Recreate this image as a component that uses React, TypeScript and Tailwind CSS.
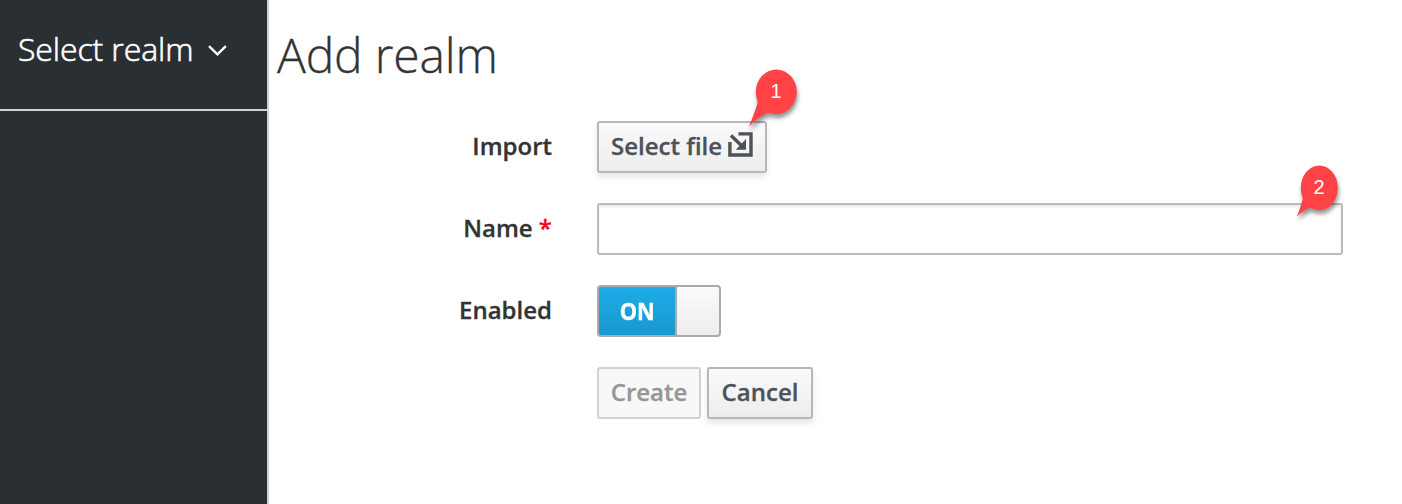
import type { ReactNode } from "react";

function Pin({ n, className, rx, tail }: { n: number; className: string; rx: number; tail: string }) {
  return (
    <svg className={`pointer-events-none absolute overflow-visible ${className}`} width="60" height="70" viewBox="0 0 60 70">
      <g fill="#ff4245" className="[filter:drop-shadow(1px_4px_2px_rgba(0,0,0,0.42))]">
        <path d={tail} />
        <ellipse cx="30.3" cy="31.8" rx={rx} ry="22.3" />
      </g>
      <text x="30" y="37.5" textAnchor="middle" fill="#fff" fontSize="20" fontWeight="400" fontFamily="Liberation Sans, Arial, sans-serif">
        {n}
      </text>
    </svg>
  );
}

function Row({ label, children }: { label?: ReactNode; children: ReactNode }) {
  return (
    <div className="flex h-[52px]">
      <div className="mr-[45px] w-[283px] text-right leading-[50px] whitespace-nowrap text-[#333] [-webkit-text-stroke:0.3px]">{label}</div>
      {children}
    </div>
  );
}

const button =
  "relative flex h-[52px] items-center justify-center rounded-[3px] border-2 border-[#b7b7b7] bg-linear-to-b from-[#fafafa] to-[#ededed] text-[#4d5258] shadow-[0_4px_6px_rgba(3,3,3,0.1)] whitespace-nowrap";

export default function App() {
  return (
    <div className="flex h-[504px] w-[1402px] overflow-hidden bg-white font-['Open_Sans',sans-serif] text-[24px] font-semibold">
      <aside className="w-[269px] shrink-0 border-r-2 border-[#d1d1d1] bg-[#2a2f33]">
        <div className="flex h-[111px] items-start border-b-2 border-[#d1d1d1] pt-[25px] pl-[18px] text-[32px] leading-[48px] font-light text-white">
          <span className="w-[190px] tracking-[-0.1px] whitespace-nowrap [-webkit-text-stroke:0.6px]">Select realm</span>
          <svg className="mt-[20px]" width="19" height="12" viewBox="0 0 19 12" fill="none" stroke="#fff" strokeWidth="2.4">
            <path d="M1 1.2 9.4 9.3 17.8 1.2" />
          </svg>
        </div>
      </aside>
      <main className="flex-1">
        <h1 className="h-[121px] pt-[23px] pl-[8px] text-[48px] leading-[64px] font-light tracking-[-0.15px] text-[#333] [-webkit-text-stroke:0.35px]">
          Add realm
        </h1>
        <div className="flex flex-col gap-[30px]">
          <Row label="Import">
            <button className={`${button} w-[170px] gap-[6px]`}>
              <span className="-mt-[3px] [-webkit-text-stroke:0.3px]">Select file</span>
              <svg className="-mt-[5px]" width="25" height="25" viewBox="0 0 25 25" fill="none" stroke="#4d5258" strokeWidth="3.4">
                <path d="M10.5 1.9H23V23H1.9V10" />
                <path d="M3 3.5 15 15" />
                <path d="M18 7V17.7H7.8Z" fill="#4d5258" stroke="none" />
              </svg>
              <Pin n={1} className="top-[-63px] left-[147px]" rx={20.5} tail="M12 40Q12 44 3 66.5Q15 54 25 52Z" />
            </button>
          </Row>
          <Row label={<>Name <span className="text-[#ff0018]">*</span></>}>
            <div className="relative h-[52px] w-[746px]">
              <input
                aria-label="Name"
                className="h-[52px] w-full rounded-[3px] border-2 border-[#bbb] px-3 shadow-[inset_0_2px_2px_rgba(3,3,3,0.075)] outline-none"
              />
              <Pin n={2} className="top-[-47px] left-[692px]" rx={18.5} tail="M14 40Q14 45 8 60.5Q15 53 25 51Z" />
            </div>
          </Row>
          <Row label="Enabled">
            <div className="flex h-[52px] w-[124px] overflow-hidden rounded-[4px] border-2 border-[#aaa] bg-linear-to-b from-[#fafafa] to-[#ededed]">
              <div className="w-[76px] bg-linear-to-b from-[#1cace8] to-[#1998cc] text-center text-[24px] leading-[47px] font-bold text-white">
                <span className="inline-block scale-x-[0.91] [-webkit-text-stroke:0.4px]">ON</span>
              </div>
              <div className="w-[2px] bg-[#aaa]" />
            </div>
          </Row>
          <Row>
            <div className="flex gap-[6px]">
              <button className="h-[52px] w-[104px] rounded-[3px] border-2 border-[#d1d1d1] bg-[#f8f8f8] pb-[3px] whitespace-nowrap text-[#969696] [-webkit-text-stroke:0.3px]">
                Create
              </button>
              <button className={`${button} w-[106px] pb-[3px] [-webkit-text-stroke:0.3px]`}>Cancel</button>
            </div>
          </Row>
        </div>
      </main>
    </div>
  );
}
